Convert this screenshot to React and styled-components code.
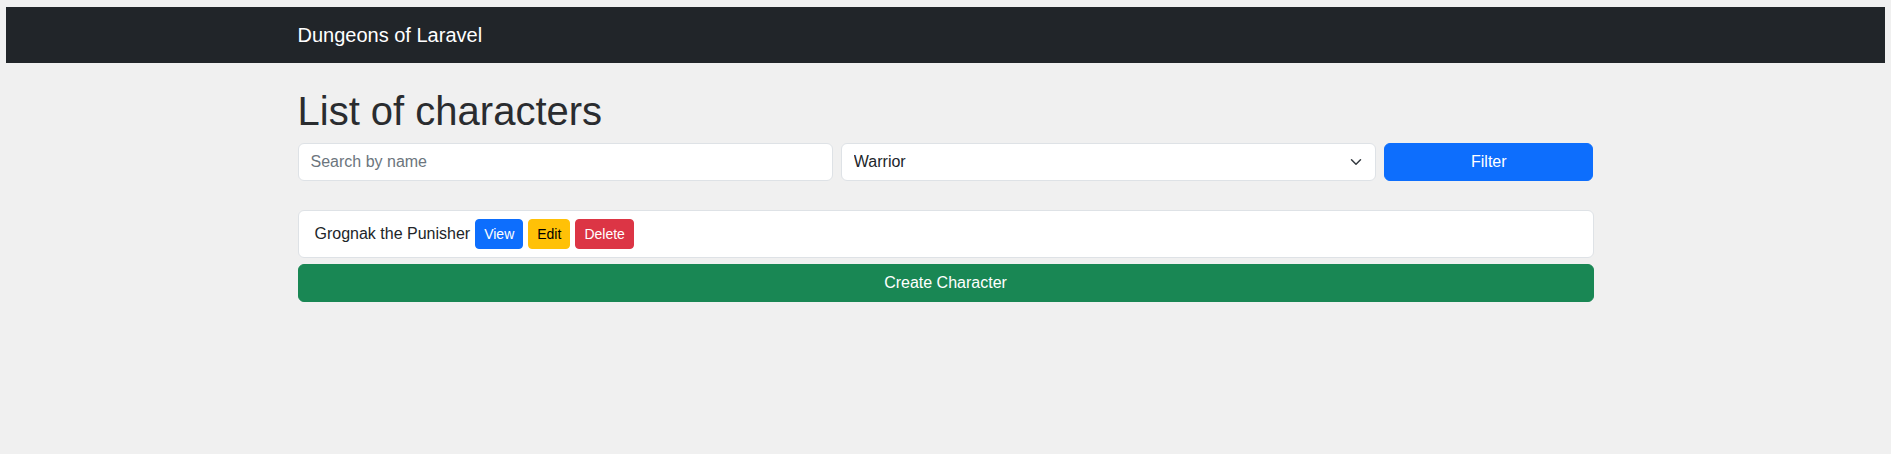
import React from "react";
import styled, { createGlobalStyle } from "styled-components";

const GlobalStyle = createGlobalStyle`
  *, *::before, *::after { box-sizing: border-box; }
  body {
    margin: 7px 6px;
    background: #f0f0f0;
    font-family: "Liberation Sans", Arial, sans-serif;
    font-size: 16px;
    line-height: 1.5;
    color: #212529;
  }
`;

const Navbar = styled.nav`
  background: #212529;
  height: 56px;
  display: flex;
  align-items: center;
`;

const Container = styled.div`
  width: 100%;
  max-width: 1320px;
  margin: 0 auto;
  padding: 0 12px;
`;

const Main = styled(Container)`
  margin-top: 24px;
`;

const Brand = styled.a`
  color: #fff;
  font-size: 20px;
  line-height: 30px;
  text-decoration: none;
`;

const Title = styled.h1`
  font-size: 40px;
  font-weight: 400;
  line-height: 1.2;
  color: #2a2c2f;
  margin: 0 0 8px;
`;

const FilterRow = styled.form`
  display: flex;
  gap: 8px;
  margin: 0 0 29px;
`;

const Col = styled.div`
  position: relative;
  flex: 0 0 calc((100% + 8px) * ${(p) => p.$span} / 12 - 8px);
`;

const fieldBase = `
  display: block;
  width: 100%;
  height: 38px;
  padding: 6px 12px;
  font-family: "Liberation Sans", Arial, sans-serif;
  font-size: 16px;
  line-height: 24px;
  color: #212529;
  background: #fff;
  border: 1px solid #dee2e6;
  border-radius: 6px;
  outline: none;
`;

const TextInput = styled.input`
  ${fieldBase}
  &::placeholder { color: #6c757d; }
`;

const Select = styled.select`
  ${fieldBase}
  appearance: none;
  padding-right: 36px;
`;

const Chevron = styled.svg`
  position: absolute;
  right: 12px;
  top: 50%;
  transform: translateY(-50%);
  pointer-events: none;
`;

const Button = styled.button`
  font-family: "Liberation Sans", Arial, sans-serif;
  border: 1px solid ${(p) => p.$bg};
  background: ${(p) => p.$bg};
  color: ${(p) => p.$fg || "#fff"};
  cursor: pointer;
`;

const BlockButton = styled(Button)`
  display: block;
  width: 100%;
  height: 38px;
  font-size: 16px;
  line-height: 24px;
  padding: 6px 12px;
  border-radius: 6px;
`;

const SmallButton = styled(Button)`
  height: 30px;
  font-size: 14px;
  line-height: 20px;
  padding: 0 8px;
  border-radius: 4px;
  margin-left: 5px;
`;

const List = styled.ul`
  list-style: none;
  margin: 0 0 6px;
  padding: 0;
`;

const ListItem = styled.li`
  display: flex;
  align-items: center;
  height: 48px;
  padding: 0 16px;
  background: #fff;
  border: 1px solid #dee2e6;
  border-radius: 6px;
`;

export default function App() {
  return (
    <>
      <GlobalStyle />
      <Navbar>
        <Container>
          <Brand href="#">Dungeons of Laravel</Brand>
        </Container>
      </Navbar>
      <Main>
        <Title>List of characters</Title>
        <FilterRow onSubmit={(e) => e.preventDefault()}>
          <Col $span={5}>
            <TextInput placeholder="Search by name" />
          </Col>
          <Col $span={5}>
            <Select defaultValue="Warrior">
              <option>All classes</option>
              <option>Warrior</option>
              <option>Mage</option>
              <option>Rogue</option>
            </Select>
            <Chevron width="16" height="12" viewBox="0 0 16 16">
              <path d="m2 5 6 6 6-6" fill="none" stroke="#343a40" strokeWidth="2" strokeLinecap="round" strokeLinejoin="round" />
            </Chevron>
          </Col>
          <Col $span={2}>
            <BlockButton $bg="#0d6efd" type="submit">Filter</BlockButton>
          </Col>
        </FilterRow>
        <List>
          <ListItem>
            <span>Grognak the Punisher</span>
            <SmallButton $bg="#0d6efd">View</SmallButton>
            <SmallButton $bg="#ffc107" $fg="#000">Edit</SmallButton>
            <SmallButton $bg="#dc3545">Delete</SmallButton>
          </ListItem>
        </List>
        <BlockButton $bg="#198754">Create Character</BlockButton>
      </Main>
    </>
  );
}
